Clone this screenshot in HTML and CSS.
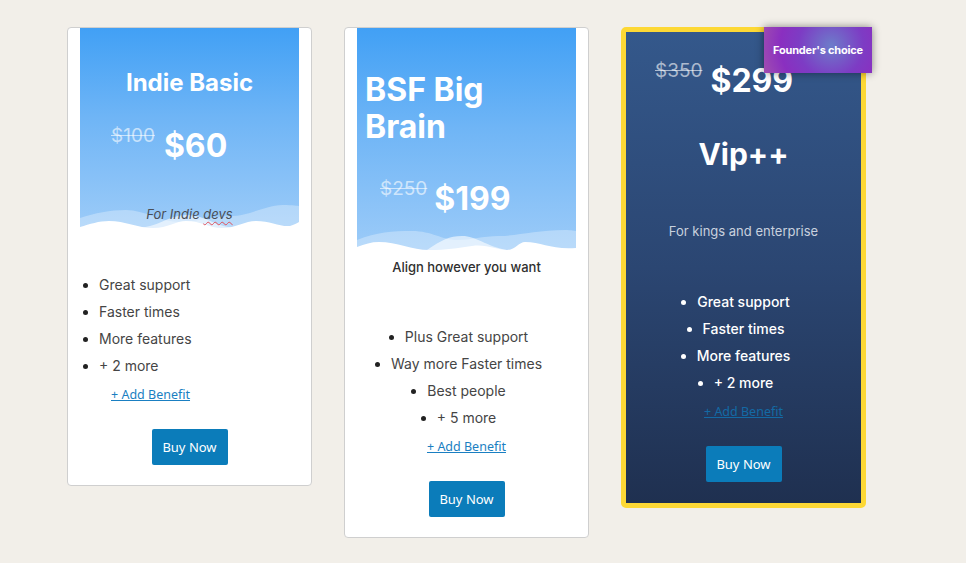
FILE: index.html
```html
<!DOCTYPE html>
<html lang="en">
<head>
<meta charset="utf-8">
<title>Pricing</title>
<link rel="stylesheet" href="styles.css">
</head>
<body>
<main class="plans">
  <section class="card card-basic">
    <div class="head">
      <h2 class="title title-basic">Indie Basic</h2>
      <div class="price price-basic">
        <span class="old">$100</span>
        <span class="now">$60</span>
      </div>
      <p class="tagline">For Indie <span class="spell">devs</span></p>
      <svg class="waves" viewBox="0 0 219 24" preserveAspectRatio="none" aria-hidden="true">
        <path fill="rgba(255,255,255,0.3)" d="M0,14 C15,9 30,6 46,6 C65,6 80,18 100,18 C120,18 132,12 150,12 C170,12 182,2 203,1 C212,1 219,2 219,2 L219,24 L0,24 Z"/>
        <path fill="rgba(255,255,255,0.6)" d="M55,24 C78,24 88,11 107,11 C126,11 136,24 158,24 Z"/>
        <path fill="#ffffff" d="M0,23 C10,20 19,17 29,17 C45,17 58,24 73,24 C88,24 96,17 106,17 C121,17 129,24 142,24 C156,24 165,17 176,17 C190,17 200,23 210,22 C214,21 217,19 219,18 L219,24 L0,24 Z"/>
      </svg>
    </div>
    <ul class="perks perks-left">
      <li>Great support</li>
      <li>Faster times</li>
      <li>More features</li>
      <li>+ 2 more</li>
    </ul>
    <a class="add add-left" href="#">+ Add Benefit</a>
    <div class="actions"><a class="buy" href="#">Buy Now</a></div>
  </section>

  <section class="card card-brain">
    <div class="head head-brain">
      <h2 class="title title-brain">BSF Big<br>Brain</h2>
      <div class="price price-brain">
        <span class="old">$250</span>
        <span class="now">$199</span>
      </div>
      <svg class="waves" viewBox="0 0 219 24" preserveAspectRatio="none" aria-hidden="true">
        <path fill="rgba(255,255,255,0.3)" d="M0,14 C20,6 35,5 55,5 C75,5 85,14 100,14 C115,14 125,10 142,10 C160,10 180,4 208,4 C214,4 219,5 219,5 L219,24 L0,24 Z"/>
        <path fill="rgba(255,255,255,0.6)" d="M70,24 C85,14 92,10 105,10 C120,10 128,20 150,24 Z"/>
        <path fill="#ffffff" d="M0,21 C8,18 14,16 22,16 C40,16 55,24 72,24 C90,24 100,22 115,20 C130,18 140,24 150,24 C158,24 162,16 168,16 C185,16 195,24 219,22 L219,24 L0,24 Z"/>
      </svg>
    </div>
    <p class="align">Align however you want</p>
    <ul class="perks perks-center">
      <li>Plus Great support</li>
      <li>Way more Faster times</li>
      <li>Best people</li>
      <li>+ 5 more</li>
    </ul>
    <a class="add add-center" href="#">+ Add Benefit</a>
    <div class="actions"><a class="buy" href="#">Buy Now</a></div>
  </section>

  <section class="card card-vip">
    <div class="badge">Founder's choice</div>
    <div class="price price-vip">
      <span class="old">$350</span>
      <span class="now">$299</span>
    </div>
    <h2 class="title title-vip">Vip++</h2>
    <p class="kings">For kings and enterprise</p>
    <ul class="perks perks-center perks-light">
      <li>Great support</li>
      <li>Faster times</li>
      <li>More features</li>
      <li>+ 2 more</li>
    </ul>
    <a class="add add-center add-dark" href="#">+ Add Benefit</a>
    <div class="actions"><a class="buy" href="#">Buy Now</a></div>
  </section>
</main>
</body>
</html>
```

FILE: styles.css
```css
* { box-sizing: border-box; }

html, body {
  margin: 0;
  padding: 0;
  background: #f2efe9;
  font-family: Inter, "Noto Sans", sans-serif;
}

.plans {
  display: flex;
  align-items: flex-start;
  gap: 32px;
  padding: 27px 0 0 67px;
}

.card {
  position: relative;
  width: 245px;
  background: #ffffff;
  border: 1px solid #cfcfcf;
  border-radius: 4px;
  padding: 0 12px 20px;
  display: flex;
  flex-direction: column;
}

.head {
  position: relative;
  background: linear-gradient(180deg, #41a0f5 0%, #6fb5f6 45%, #9ccbf8 100%);
  padding: 40px 0 5px;
  color: #fff;
}

.head-brain {
  padding: 43px 0 31px 8px;
}

.title {
  margin: 0;
  font-weight: 700;
  color: #fff;
}

.title-basic {
  text-align: center;
  font-size: 24px;
  line-height: 29px;
}

.title-brain {
  font-size: 32px;
  line-height: 37px;
}

.price {
  display: flex;
  align-items: flex-start;
  gap: 9px;
}

.price .old {
  font-size: 19px;
  line-height: 24px;
  margin-top: -2px;
  color: rgba(255, 255, 255, 0.6);
  text-decoration: line-through;
}

.price .now {
  font-size: 32px;
  line-height: 40px;
  font-weight: 700;
  color: #fff;
}

.price-basic {
  margin: 29px 0 0 31px;
}

.price-brain {
  margin: 34px 0 0 15px;
  gap: 7px;
}

.tagline {
  position: relative;
  z-index: 1;
  margin: 39px 0 0;
  text-align: center;
  font-size: 13px;
  line-height: 18px;
  font-style: italic;
  color: #4a4f57;
}

.spell {
  text-decoration: underline wavy #e0505a;
  text-decoration-thickness: 1px;
  text-underline-offset: 2px;
}

.waves {
  position: absolute;
  left: 0;
  bottom: 0;
  width: 100%;
  height: 24px;
  display: block;
}

.align {
  margin: 8px 0 0;
  text-align: center;
  font-size: 13px;
  line-height: 18px;
  font-weight: 500;
  color: #2f2f2f;
}

.perks {
  margin: 0;
  padding: 0;
  font-size: 14px;
  line-height: 27px;
  color: #454545;
}

.perks li::marker { color: #222; }

.perks-left {
  margin-top: 43px;
  padding-left: 19px;
}

.perks-center li {
  width: fit-content;
  margin: 0 auto;
}

.card-brain .perks-center { margin-top: 47px; }

.perks-light {
  margin-top: 48px;
  color: #fff;
  font-weight: 500;
}

.perks-light li::marker { color: #fff; }

.add {
  display: block;
  margin-top: 7px;
  font-family: "Noto Sans", "Open Sans", sans-serif;
  font-size: 12.5px;
  line-height: 18px;
  color: #1a7fc2;
  text-decoration: underline;
}

.add-left { padding-left: 31px; }

.add-center { text-align: center; }

.add-dark { color: #136aa5; }

.actions {
  margin-top: 25px;
  display: flex;
  justify-content: center;
}

.buy {
  display: flex;
  align-items: center;
  justify-content: center;
  width: 76px;
  height: 36px;
  background: #0b7cba;
  border-radius: 2px;
  color: #fff;
  font-family: "Noto Sans", "Open Sans", sans-serif;
  font-size: 13px;
  text-decoration: none;
}

.card-vip {
  border: 5px solid #fdd835;
  border-radius: 5px;
  background: linear-gradient(180deg, #34588b 0%, #2b4672 50%, #1f3050 100%);
  padding: 29px 12px 21px;
}

.price-vip { margin-left: 17px; gap: 8px; }

.title-vip {
  margin-top: 32px;
  text-align: center;
  font-size: 30px;
  line-height: 43px;
}

.kings {
  margin: 46px 0 0;
  text-align: center;
  font-size: 13px;
  line-height: 18px;
  color: #c9d1de;
}

.badge {
  position: absolute;
  top: -5px;
  right: -11px;
  width: 108px;
  height: 46px;
  display: flex;
  align-items: center;
  justify-content: center;
  background: radial-gradient(circle at 62% 40%, #6d7cca 0%, #7d3cc4 45%, #8a2fc0 70%, #a04eb0 100%);
  box-shadow: 0 0 8px rgba(0, 0, 0, 0.45);
  color: #fff;
  font-size: 11px;
  font-weight: 700;
  letter-spacing: -0.2px;
}
```
